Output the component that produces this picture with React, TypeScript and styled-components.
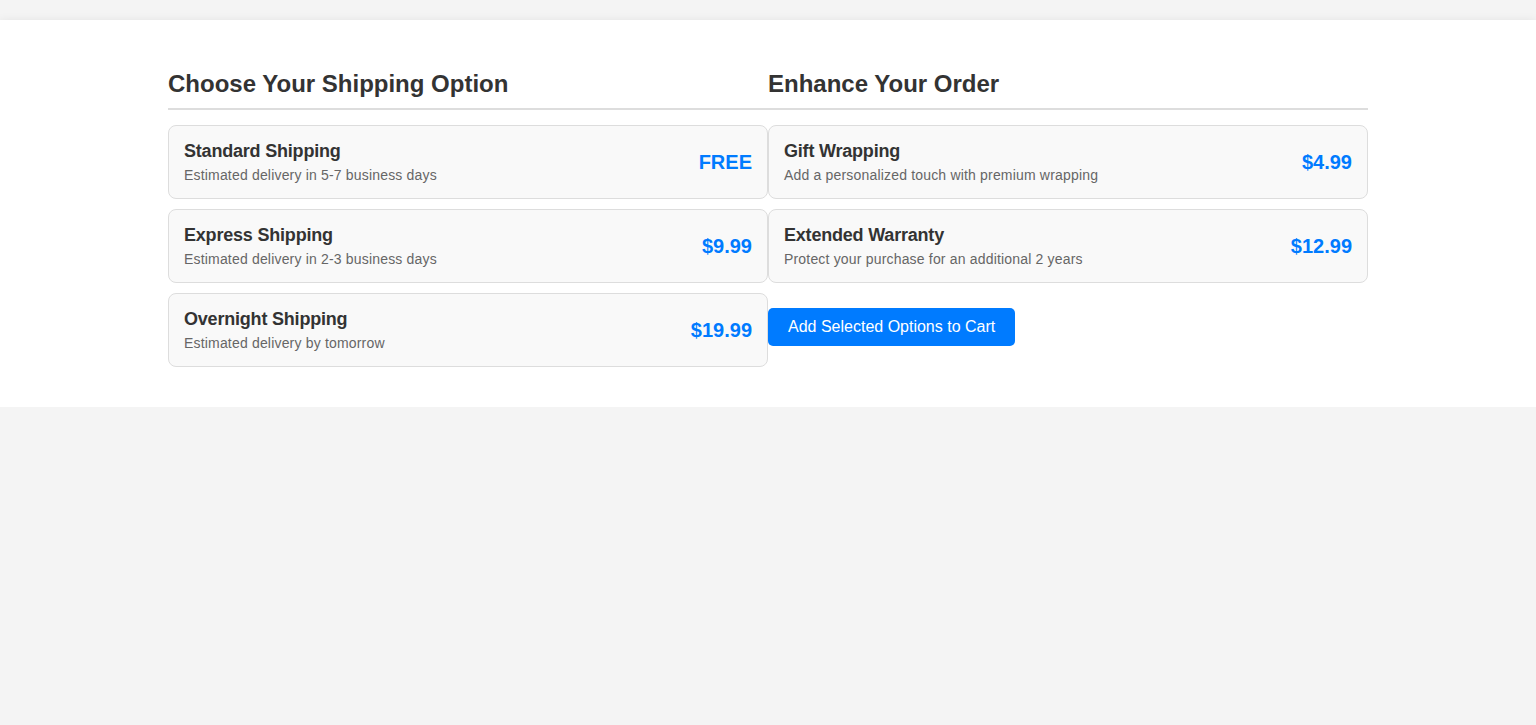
import React from "react";
import styled, { createGlobalStyle } from "styled-components";

const Global = createGlobalStyle`
  html, body { margin: 0; padding: 0; }
  body {
    background: #f4f4f4;
    font-family: "Liberation Sans", Arial, sans-serif;
    color: #333;
  }
`;

const Panel = styled.section`
  margin-top: 20px;
  background: #fff;
  padding: 30px 0;
  box-shadow: 0 2px 10px rgba(0, 0, 0, 0.1);
`;

const Inner = styled.div`
  max-width: 1200px;
  margin: 0 auto;
  display: grid;
  grid-template-columns: 1fr 1fr;
`;

const Column = styled.div`
  display: flex;
  flex-direction: column;
  align-items: stretch;
`;

const Heading = styled.h2`
  font-size: 24px;
  font-weight: bold;
  color: #333;
  margin: 20px 0 15px;
  padding-bottom: 10px;
  border-bottom: 2px solid #ddd;
`;

const Card = styled.div`
  display: flex;
  justify-content: space-between;
  align-items: center;
  background: #f9f9f9;
  border: 1px solid #ddd;
  border-radius: 8px;
  padding: 15px;
  margin-bottom: 10px;
`;

const Info = styled.div`
  display: flex;
  flex-direction: column;
`;

const Title = styled.div`
  font-size: 18px;
  font-weight: bold;
  color: #333;
  line-height: 21px;
  letter-spacing: -0.2px;
  margin-bottom: 5px;
`;

const Desc = styled.div`
  font-size: 14px;
  color: #666;
  line-height: 16px;
  letter-spacing: 0.18px;
`;

const Price = styled.div`
  font-size: 20px;
  font-weight: bold;
  color: #007bff;
`;

const Button = styled.button`
  align-self: flex-start;
  margin-top: 15px;
  background: #007bff;
  color: #fff;
  border: none;
  border-radius: 5px;
  padding: 10px 20px;
  font-family: "Liberation Sans", Arial, sans-serif;
  font-size: 16px;
  line-height: 1.15;
  cursor: pointer;
`;

const shipping = [
  { title: "Standard Shipping", desc: "Estimated delivery in 5-7 business days", price: "FREE" },
  { title: "Express Shipping", desc: "Estimated delivery in 2-3 business days", price: "$9.99" },
  { title: "Overnight Shipping", desc: "Estimated delivery by tomorrow", price: "$19.99" },
];

const extras = [
  { title: "Gift Wrapping", desc: "Add a personalized touch with premium wrapping", price: "$4.99" },
  { title: "Extended Warranty", desc: "Protect your purchase for an additional 2 years", price: "$12.99" },
];

type Item = { title: string; desc: string; price: string };

const OptionCard = ({ item }: { item: Item }) => (
  <Card>
    <Info>
      <Title>{item.title}</Title>
      <Desc>{item.desc}</Desc>
    </Info>
    <Price>{item.price}</Price>
  </Card>
);

export default function App() {
  return (
    <>
      <Global />
      <Panel>
        <Inner>
          <Column>
            <Heading>Choose Your Shipping Option</Heading>
            {shipping.map((s) => (
              <OptionCard key={s.title} item={s} />
            ))}
          </Column>
          <Column>
            <Heading>Enhance Your Order</Heading>
            {extras.map((s) => (
              <OptionCard key={s.title} item={s} />
            ))}
            <Button>Add Selected Options to Cart</Button>
          </Column>
        </Inner>
      </Panel>
    </>
  );
}
